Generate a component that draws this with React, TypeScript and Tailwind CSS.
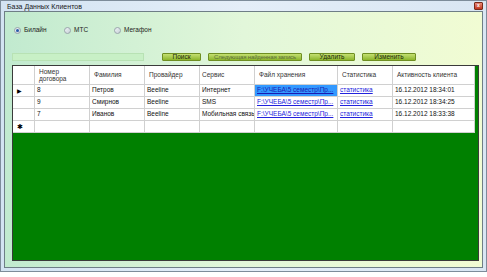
import React from 'react';

const rows = [
  { id: '8', name: 'Петров', prov: 'Beeline', serv: 'Интернет', file: 'F:\\УЧЕБА\\5 семестр\\Пр...', stat: 'статистика', date: '16.12.2012 18:34:01', current: true },
  { id: '9', name: 'Смирнов', prov: 'Beeline', serv: 'SMS', file: 'F:\\УЧЕБА\\5 семестр\\Пр...', stat: 'статистика', date: '16.12.2012 18:34:25' },
  { id: '7', name: 'Иванов', prov: 'Beeline', serv: 'Мобильная связь', file: 'F:\\УЧЕБА\\5 семестр\\Пр...', stat: 'статистика', date: '16.12.2012 18:33:38' },
];

const cols = 'grid grid-cols-[22px_55px_55px_55px_55px_83px_55px_82px]';
const cell = 'border-r border-b border-[#d0d0d0] px-[2px] flex items-center overflow-hidden whitespace-nowrap';

function Radio({ label, checked }: { label: string; checked?: boolean }) {
  return (
    <div className="w-[50px] flex items-center gap-[3px]">
      <div className="w-[7px] h-[7px] rounded-full border border-[#9aa4ac] bg-gradient-to-br from-[#eef2f5] to-[#c8d2d8] flex items-center justify-center">
        {checked && <div className="w-[3px] h-[3px] rounded-full bg-[#2a5aa8]" />}
      </div>
      <span>{label}</span>
    </div>
  );
}

function Btn({ label, w, disabled }: { label: string; w: string; disabled?: boolean }) {
  return (
    <div
      className={`${w} h-[8px] flex items-center justify-center whitespace-nowrap overflow-hidden rounded-[1px] border border-[#6f8f22] bg-gradient-to-b from-[#c4e070] to-[#8db62a] ${
        disabled ? 'text-[#5c6e3a] text-[6px] tracking-[-0.15px]' : 'text-[#1c2a08] text-[6.5px]'
      }`}
    >
      {label}
    </div>
  );
}

export default function App() {
  return (
    <div className="w-[487px] h-[277px] bg-white font-['Liberation_Sans',sans-serif] text-[6.5px] text-[#222] leading-none overflow-hidden">
      <div className="h-[272px] flex flex-col border border-[#7d8c9a] bg-gradient-to-r from-[#d3e3f2] via-[#e4eef8] to-[#d9e6f3] px-[3px] pb-[3px]">
        {/* title bar */}
        <div className="h-[10px] flex items-center justify-between pl-[3px]">
          <span className="text-[7px] text-[#1a1a1a]">База Данных Клиентов</span>
          <div className="w-[9px] h-[8px] -mt-[1px] rounded-[1px] bg-gradient-to-b from-[#e88a78] to-[#c2341c] border border-[#7a2a1a] flex items-center justify-center text-white text-[5px] font-bold">
            x
          </div>
        </div>

        {/* client area */}
        <div className="flex-1 flex flex-col border border-[#6e7e86] bg-gradient-to-r from-[#c1eacf] via-[#e2f7da] to-[#f1fcd3]">
          <div className="flex items-center pl-[9px] mt-[14px] h-[8px]">
            <Radio label="Билайн" checked />
            <Radio label="МТС" />
            <Radio label="Мегафон" />
          </div>

          <div className="flex items-center mt-[19px] pl-[7px] h-[8px]">
            <div className="w-[132px] h-[8px] bg-[#c8f0c6] border border-[#b8e2b4]" />
            <div className="flex gap-[7px] ml-[18px]">
              <Btn label="Поиск" w="w-[39px]" />
              <Btn label="Следующая найденная запись" w="w-[94px]" disabled />
              <Btn label="Удалить" w="w-[46px]" />
              <Btn label="Изменить" w="w-[54px]" />
            </div>
          </div>

          {/* data grid */}
          <div className="mt-[4px] ml-[7px] w-[467px] h-[196px] bg-[#008000] border border-[#3a3a3a] flex flex-col">
            <div className="bg-white w-[462px] text-[#333]">
              <div className={`${cols} h-[19px]`}>
                <div className={cell} />
                <div className={`${cell} pl-[4px] leading-[7px]`}>Номер<br />договора</div>
                <div className={`${cell} pl-[4px]`}>Фамилия</div>
                <div className={`${cell} pl-[4px]`}>Провайдер</div>
                <div className={`${cell} pl-[2px]`}>Сервис</div>
                <div className={`${cell} pl-[4px]`}>Файл хранения</div>
                <div className={`${cell} pl-[4px]`}>Статистика</div>
                <div className={`${cell} pl-[4px]`}>Активность клиента</div>
              </div>
              {rows.map((r) => (
                <div key={r.id} className={`${cols} h-[12px] text-[#111]`}>
                  <div className={`${cell} justify-start pl-[4px]`}>
                    {r.current && <span className="text-[6px] text-black">▶</span>}
                  </div>
                  <div className={cell}>{r.id}</div>
                  <div className={cell}>{r.name}</div>
                  <div className={cell}>{r.prov}</div>
                  <div className={cell}>{r.serv}</div>
                  <div className={`${cell} ${r.current ? 'bg-[#3399ff]' : ''}`}>
                    <span className={`underline ${r.current ? 'text-[#1a1ab0]' : 'text-[#2222dd]'}`}>{r.file}</span>
                  </div>
                  <div className={cell}>
                    <span className="underline text-[#2222dd]">{r.stat}</span>
                  </div>
                  <div className={cell}>{r.date}</div>
                </div>
              ))}
              <div className={`${cols} h-[12px]`}>
                <div className={`${cell} pl-[4px]`}>
                  <span className="text-[7px] text-black">✱</span>
                </div>
                <div className={cell} />
                <div className={cell} />
                <div className={cell} />
                <div className={cell} />
                <div className={cell} />
                <div className={cell} />
                <div className={cell} />
              </div>
            </div>
          </div>
        </div>
      </div>
    </div>
  );
}
